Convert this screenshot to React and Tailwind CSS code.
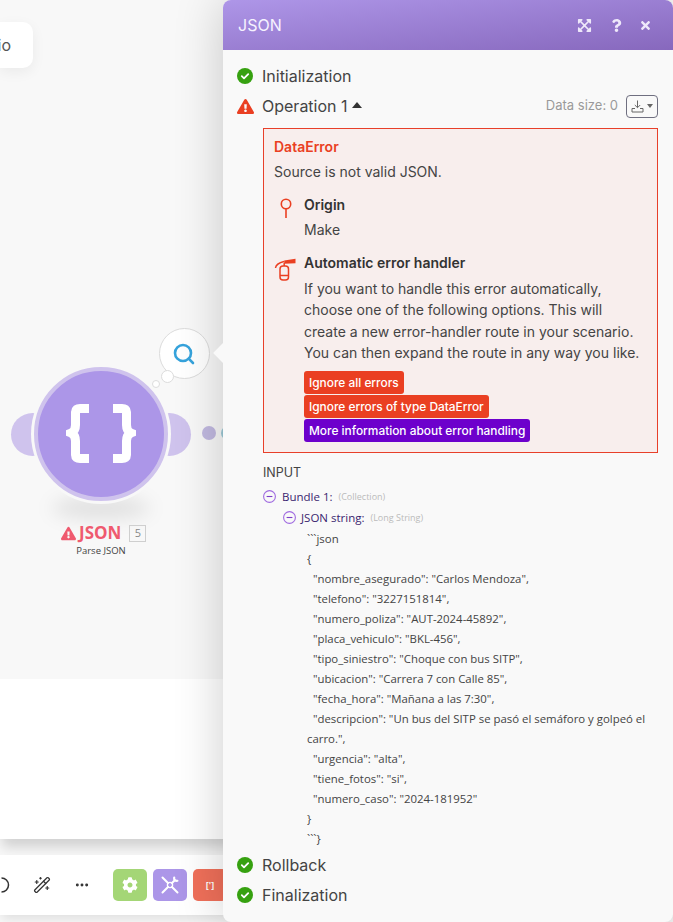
import React from "react";
import { FaExpandArrowsAlt, FaQuestion, FaTimes, FaExclamationTriangle, FaCog } from "react-icons/fa";
import { WandSparkles, Search, Ellipsis } from "lucide-react";

const jsonText = `\`\`\`json
{
  "nombre_asegurado": "Carlos Mendoza",
  "telefono": "3227151814",
  "numero_poliza": "AUT-2024-45892",
  "placa_vehiculo": "BKL-456",
  "tipo_siniestro": "Choque con bus SITP",
  "ubicacion": "Carrera 7 con Calle 85",
  "fecha_hora": "Mañana a las 7:30",
  "descripcion": "Un bus del SITP se pasó el semáforo y golpeó el carro.",
  "urgencia": "alta",
  "tiene_fotos": "si",
  "numero_caso": "2024-181952"
}
\`\`\`}`;

function Check() {
  return (
    <svg width="16" height="16" viewBox="0 0 16 16" className="shrink-0">
      <circle cx="8" cy="8" r="8" fill="#36a110" />
      <path d="M4.8 8.2l2.2 2.1 4.2-4.2" fill="none" stroke="#fff" strokeWidth="1.8" strokeLinecap="round" strokeLinejoin="round" />
    </svg>
  );
}

function Minus() {
  return (
    <svg width="13" height="13" viewBox="0 0 13 13" className="shrink-0">
      <circle cx="6.5" cy="6.5" r="5.9" fill="none" stroke="#a06be0" strokeWidth="1.1" />
      <path d="M3.6 6.5h5.8" stroke="#7d3fc8" strokeWidth="1.1" />
    </svg>
  );
}

function Node() {
  return (
    <div className="absolute left-0 top-0 w-[223px] h-[600px]">
      <div className="absolute left-[11px] top-[413px] w-[180px] h-[43px] flex justify-between">
        <div className="w-[43px] h-[43px] rounded-full bg-[#cfc3ed]" />
        <div className="w-[43px] h-[43px] rounded-full bg-[#cfc3ed]" />
      </div>
      <div className="absolute left-[52px] top-[497px] w-[98px] h-[22px] rounded-[50%] bg-[#00000018] blur-[9px]" />
      <div className="absolute left-[31px] top-[364px] w-[140px] h-[140px] rounded-full bg-[#f8f8f8] flex items-center justify-center">
        <div className="w-[134px] h-[134px] rounded-full bg-[#ac96e8] border-[4px] border-[#cfc3ed] flex items-center justify-center">
          <svg width="70" height="64" viewBox="66 401 70 64" className="-mt-[2px]">
            <path d="M89 408.500H80Q75.500 408.500 75.500 412V425Q75.500 431 71 433Q75.500 435 75.500 441V455Q75.500 458.500 80 458.500H89" fill="none" stroke="#fff" strokeWidth="9" />
            <path d="M113 408.500H122Q126.500 408.500 126.500 412V425Q126.500 431 131 433Q126.500 435 126.500 441V455Q126.500 458.500 122 458.500H113" fill="none" stroke="#fff" strokeWidth="9" />
          </svg>
        </div>
      </div>
      <div className="absolute left-[202px] top-[426px] w-[14px] h-[14px] rounded-full bg-[#c1b9e0]" />
      <div className="absolute left-[221px] top-[426px] w-[14px] h-[14px] rounded-full bg-[#9cc9d6]" />
      <div className="absolute left-[159px] top-[328px] w-[51px] h-[51px] rounded-full bg-white border border-[#dcdcdc] flex items-center justify-center">
        <Search size={24} strokeWidth={2.6} color="#36a3dc" className="-ml-[1px]" />
      </div>
      <div className="absolute left-[161px] top-[370px] w-[13px] h-[13px] rounded-full bg-white border border-[#dcdcdc]" />
      <div className="absolute left-[152px] top-[380px] w-[8px] h-[8px] rounded-full bg-white border border-[#dcdcdc]" />
      <div className="absolute left-[61px] top-[523px] flex items-center text-[#ef5a6f]">
        <FaExclamationTriangle size={15} />
        <span className="ml-[3px] font-['Open_Sans',sans-serif] font-bold text-[17px] leading-[20px]">JSON</span>
        <span className="ml-[8px] w-[17px] h-[17px] border border-[#cfcfcf] flex items-center justify-center text-[11px] text-[#888] font-['Open_Sans',sans-serif]">5</span>
      </div>
      <div className="absolute left-0 top-[544px] w-[202px] text-center text-[9.5px] leading-[14px] text-[#444] font-['Open_Sans',sans-serif]">Parse JSON</div>
    </div>
  );
}

function Canvas() {
  return (
    <div className="w-full h-full flex flex-col">
      <div className="h-[679px] pt-[22px]">
        <div className="w-[33px] h-[46px] bg-white rounded-r-[10px] shadow-[0_4px_14px_rgba(0,0,0,0.06)] flex items-center justify-end pr-[22px] text-[16px] text-[#555] font-['Inter',sans-serif]">
          io
        </div>
      </div>
      <div className="h-[160px] bg-white shadow-[0_10px_12px_-2px_rgba(0,0,0,0.16)]" />
      <div className="relative mt-[16px] h-[60px] bg-white shadow-[0_6px_10px_-2px_rgba(0,0,0,0.1)] flex items-center">
        <svg width="10" height="18" viewBox="0 0 10 18" className="text-[#333]">
          <path d="M0 2a7 7 0 0 1 0 14" transform="translate(1.5 0)" fill="none" stroke="currentColor" strokeWidth="1.5" />
        </svg>
        <WandSparkles size={18} strokeWidth={1.6} color="#333" className="ml-[23px]" />
        <Ellipsis size={16} strokeWidth={2.4} color="#333" className="ml-[23px]" />
        <div className="ml-[23px] w-[34px] h-[32px] rounded-[5px] bg-[#a4d676] flex items-center justify-center text-white"><FaCog size={16} /></div>
        <div className="ml-[6px] w-[34px] h-[32px] rounded-[5px] bg-[#ac96e8] flex items-center justify-center">
          <svg width="18" height="18" viewBox="0 0 18 18" fill="none" stroke="#fff" strokeWidth="2" strokeLinecap="round">
            <circle cx="9" cy="9" r="2.6" strokeWidth="1.3" />
            <path d="M1.5 1.5L7 7M11 11l5.5 5.5M1.5 16.5L7 11M11 7l2.5-2.5" />
            <path d="M13.2 1.6a2.6 2.6 0 0 0 3.2 3.2" strokeWidth="2.2" />
          </svg>
        </div>
        <div className="ml-[6px] w-[34px] h-[32px] rounded-[5px] bg-[#f0705a] flex items-center justify-center text-white text-[9px] font-bold font-['Open_Sans',sans-serif]">[']</div>
      </div>
    </div>
  );
}

function ErrorBox() {
  return (
    <div className="mt-[7px] mr-[15px] ml-[40px] border border-[#e8402a] bg-[#f8eeed] px-[10px] pt-[8px] pb-[10px] text-[14px] text-[#444]">
      <div className="leading-[20px] font-semibold text-[#ea3f22]">DataError</div>
      <div className="mt-[5px] leading-[20px]">Source is not valid JSON.</div>
      <div className="mt-[13px] flex">
        <div className="w-[30px] shrink-0 pl-[5px] pt-[3px]">
          <svg width="14" height="20" viewBox="0 0 14 20" fill="none" stroke="#ea3f22" strokeWidth="1.6">
            <circle cx="7" cy="6" r="4.7" />
            <path d="M7 11v9" />
          </svg>
        </div>
        <div>
          <div className="leading-[20px] font-semibold text-[#333]">Origin</div>
          <div className="mt-[5px] leading-[20px]">Make</div>
        </div>
      </div>
      <div className="mt-[13px] flex">
        <div className="w-[30px] shrink-0 pt-[5px]">
          <svg width="22" height="23" viewBox="0 0 22 23" fill="none" stroke="#ea3f22" strokeWidth="1.5">
            <rect x="6" y="8" width="8.5" height="14" rx="3" />
            <path d="M6 17.5h8.5" />
            <path d="M1.5 10Q2 5.5 10 3.5" />
            <path d="M10.2 5.8V2.4L21.5 0.8v4.4z" fill="#ea3f22" stroke="none" />
            <path d="M10.2 8V5" />
          </svg>
        </div>
        <div className="min-w-0">
          <div className="leading-[20px] font-semibold text-[#333]">Automatic error handler</div>
          <div className="mt-[5px] leading-[21.33px]">If you want to handle this error automatically, choose one of the following options. This will create a new error-handler route in your scenario. You can then expand the route in any way you like.</div>
          <div className="mt-[8px] flex flex-col items-start gap-[1px] text-[11.9px] font-medium text-white leading-[23px]">
            <div className="h-[23px] px-[5px] rounded-[3px] bg-[#ea3f22]">Ignore all errors</div>
            <div className="h-[23px] px-[5px] rounded-[3px] bg-[#ea3f22]">Ignore errors of type DataError</div>
            <div className="h-[23px] px-[5px] rounded-[3px] bg-[#6d00cc]">More information about error handling</div>
          </div>
        </div>
      </div>
    </div>
  );
}

function Panel() {
  return (
    <div className="absolute left-[223px] top-0 w-[450px] h-[922px] bg-[#f9f9f9] rounded-lg shadow-[0_0_50px_rgba(0,0,0,0.2)] font-['Inter',sans-serif]">
      <div className="absolute -left-[7px] top-[346px] w-[14px] h-[14px] rotate-45 bg-[#f9f9f9]" />
      <div className="relative h-[50px] rounded-t-lg bg-gradient-to-br from-[#ae96e8] to-[#8768bd] flex items-center pl-[15px] pr-[21px] text-white">
        <span className="text-[16px] text-[#f6f2ff]">JSON</span>
        <div className="ml-auto flex items-center text-[#eee8fa]">
          <FaExpandArrowsAlt size={15} />
          <FaQuestion size={13} className="ml-[18px]" />
          <FaTimes size={13} className="ml-[16px]" />
        </div>
      </div>
      <div className="relative">
        <div className="mt-[11px] h-[30px] pl-[14px] flex items-center gap-[9px] text-[16px] text-[#444]">
          <Check />
          <span>Initialization</span>
        </div>
        <div className="h-[30px] pl-[14px] pr-[15px] flex items-center text-[16px] text-[#444]">
          <FaExclamationTriangle size={17} color="#ea3f22" className="shrink-0" />
          <span className="ml-[8px]">Operation 1</span>
          <svg width="10" height="6" viewBox="0 0 10 6" className="ml-[4px] -mt-[2px]"><path d="M5 0l5 6H0z" fill="#333" /></svg>
          <span className="ml-auto text-[13px] text-[#999]">Data size: 0</span>
          <div className="ml-[8px] w-[32px] h-[23px] border border-[#6f6f80] rounded-[4px] flex items-center justify-center gap-[3px]">
            <svg width="13" height="13" viewBox="0 0 13 13" fill="none" stroke="#666" strokeWidth="1">
              <path d="M6.5 0.5v7M3.8 5l2.7 2.7L9.2 5" />
              <path d="M1 8.5v3.5h11V8.5h-3M1 8.5h3" />
            </svg>
            <svg width="6" height="4" viewBox="0 0 6 4"><path d="M0 0h6L3 4z" fill="#666" /></svg>
          </div>
        </div>
        <ErrorBox />
        <div className="mt-[12px] pl-[40px] text-[12.5px] leading-[16px] text-[#444]">INPUT</div>
        <div className="mt-[5px] font-['Open_Sans',sans-serif] text-[#444]">
          <div className="h-[21px] pl-[40px] flex items-center">
            <Minus />
            <span className="ml-[6px] text-[11.5px] text-[#3a1f70]">Bundle 1:</span>
            <span className="ml-[6px] text-[9px] text-[#bbb]">(Collection)</span>
          </div>
          <div className="h-[21px] pl-[60px] flex items-center">
            <Minus />
            <span className="ml-[5px] text-[11.5px] text-[#3a1f70]">JSON string:</span>
            <span className="ml-[6px] text-[9px] text-[#bbb]">(Long String)</span>
          </div>
          <div className="pt-[1px] pl-[84px] pr-[20px] text-[11.4px] leading-[20px] whitespace-pre-wrap text-[#444]">{jsonText}</div>
        </div>
        <div className="mt-[1px] h-[30px] pl-[14px] flex items-center gap-[9px] text-[16px] text-[#444]">
          <Check />
          <span>Rollback</span>
        </div>
        <div className="h-[30px] pl-[14px] flex items-center gap-[9px] text-[16px] text-[#444]">
          <Check />
          <span>Finalization</span>
        </div>
      </div>
    </div>
  );
}

export default function App() {
  return (
    <div className="relative w-[673px] h-[922px] overflow-hidden bg-[#f8f8f8]">
      <Canvas />
      <Node />
      <Panel />
    </div>
  );
}
